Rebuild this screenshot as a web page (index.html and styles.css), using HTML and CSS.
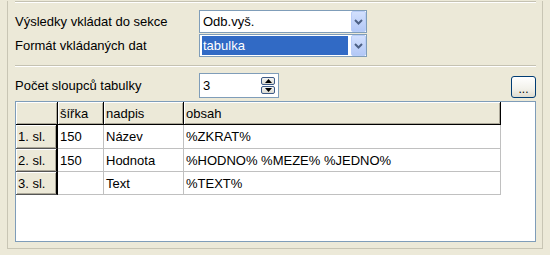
FILE: index.html
```html
<!DOCTYPE html>
<html>
<head>
<meta charset="utf-8">
<link rel="stylesheet" href="styles.css">
</head>
<body>
<div class="frame">
  <div class="sec sec1">
    <div class="row r1">
      <span class="lbl">Výsledky vkládat do sekce</span>
      <div class="combo">
        <span class="val">Odb.vyš.</span>
        <span class="dd"><svg width="9" height="6" viewBox="0 0 9 6"><path d="M1 1 L4.5 4.5 L8 1" fill="none" stroke="#4d6185" stroke-width="2"/></svg></span>
      </div>
    </div>
    <div class="row r2">
      <span class="lbl">Formát vkládaných dat</span>
      <div class="combo">
        <span class="val sel">tabulka</span>
        <span class="dd"><svg width="9" height="6" viewBox="0 0 9 6"><path d="M1 1 L4.5 4.5 L8 1" fill="none" stroke="#4d6185" stroke-width="2"/></svg></span>
      </div>
    </div>
  </div>
  <div class="sec sec2">
    <div class="row r3">
      <span class="lbl">Počet sloupců tabulky</span>
      <div class="spin">
        <span class="val">3</span>
        <span class="arrows">
          <span class="ar"><svg width="7" height="4" viewBox="0 0 7 4"><path d="M0 4 L3.5 0 L7 4 Z" fill="#000"/></svg></span>
          <span class="ar"><svg width="7" height="4" viewBox="0 0 7 4"><path d="M0 0 L3.5 4 L7 0 Z" fill="#000"/></svg></span>
        </span>
      </div>
      <button class="dots">...</button>
    </div>
    <div class="gridbox">
      <div class="grid">
        <div class="hc"></div><div class="hc">šířka</div><div class="hc">nadpis</div><div class="hc">obsah</div>
        <div class="rh">1. sl.</div><div class="dc">150</div><div class="dc">Název</div><div class="dc">%ZKRAT%</div>
        <div class="rh">2. sl.</div><div class="dc">150</div><div class="dc">Hodnota</div><div class="dc">%HODNO% %MEZE% %JEDNO%</div>
        <div class="rh">3. sl.</div><div class="dc"></div><div class="dc">Text</div><div class="dc">%TEXT%</div>
      </div>
    </div>
  </div>
</div>
</body>
</html>
```
FILE: styles.css
```css
* { box-sizing: border-box; }
html, body {
  margin: 0;
  padding: 0;
  width: 550px;
  height: 255px;
  overflow: hidden;
  background: #ece9d8;
  font-family: "Liberation Sans", Arial, sans-serif;
  font-size: 13px;
  color: #000;
}
.frame {
  margin-left: 7px;
  width: 536px;
  height: 248px;
  border-left: 1px solid #c8c5b4;
  border-right: 1px solid #c8c5b4;
  border-bottom: 1px solid #c8c5b4;
  padding: 0 6px 0 7px;
}
.sec {
  border-top: 1px solid #c5c2b2;
  box-shadow: inset 0 1px 0 #fff;
}
.sec1 {
  margin-top: 1px;
  height: 64px;
  padding-top: 8px;
}
.row {
  display: flex;
  align-items: center;
}
.lbl {
  width: 184px;
  flex: none;
}
.r1 { height: 23px; }
.r2 { height: 23px; margin-top: 1px; }
.combo {
  width: 168px;
  height: 23px;
  border: 1px solid #7f9db9;
  background: #fff;
  display: flex;
  align-items: center;
  padding: 1px 0 1px 2px;
}
.combo .val {
  flex: 1;
  height: 19px;
  line-height: 19px;
  padding-left: 1px;
  margin-right: 3px;
}
.combo .val.sel {
  background: #316ac5;
  color: #fff;
}
.dd {
  width: 15px;
  height: 21px;
  margin-top: -1px;
  margin-bottom: -1px;
  border: 1px solid #b9cdf8;
  border-radius: 2px;
  background: linear-gradient(#d2e0fd, #b3c8f6);
  display: flex;
  align-items: center;
  justify-content: center;
  padding-top: 1px;
}
.sec2 {
  padding-top: 6px;
}
.r3 { height: 27px; }
.spin {
  width: 80px;
  height: 25px;
  border: 1px solid #7f9db9;
  background: #fff;
  display: flex;
  align-items: center;
  padding-left: 3px;
}
.spin .val { flex: 1; }
.arrows {
  display: flex;
  flex-direction: column;
  gap: 1px;
  margin-right: 3px;
}
.ar {
  width: 14px;
  height: 8px;
  border: 1px solid #3d5a86;
  border-radius: 2px;
  background: linear-gradient(#f4f4f2, #dcdbd2);
  display: flex;
  align-items: center;
  justify-content: center;
}
.dots {
  margin-left: auto;
  margin-top: 3px;
  width: 25px;
  height: 22px;
  border: 1px solid #003c74;
  border-radius: 3px;
  background: linear-gradient(#ffffff, #f2f1ea 60%, #dedcd0);
  font-family: "Liberation Sans", Arial, sans-serif;
  font-size: 12px;
  padding: 4px 0 0 0;
  color: #000;
  line-height: 12px;
}
.gridbox {
  margin-top: 2px;
  width: 521px;
  height: 141px;
  border: 1px solid #7f9db9;
  background: #fff;
}
.grid {
  display: grid;
  grid-template-columns: 42px 46px 80px 317px;
  grid-template-rows: 23px 24px 23px 23px;
}
.grid > div {
  display: flex;
  align-items: center;
  padding-left: 2px;
  white-space: nowrap;
}
.hc {
  background: #ece9d8;
  border-right: 1px solid #000;
  border-bottom: 1px solid #000;
  box-shadow: inset 1px 1px 0 #fff, inset -1px -1px 0 #aca899;
}
.rh {
  background: #ece9d8;
  border-right: 2px solid #000;
  border-bottom: 1px solid #555;
  box-shadow: inset 1px 1px 0 #fff, inset -1px -1px 0 #aca899;
}
.dc {
  border-right: 1px solid #c0c0c0;
  border-bottom: 1px solid #c0c0c0;
}
```
